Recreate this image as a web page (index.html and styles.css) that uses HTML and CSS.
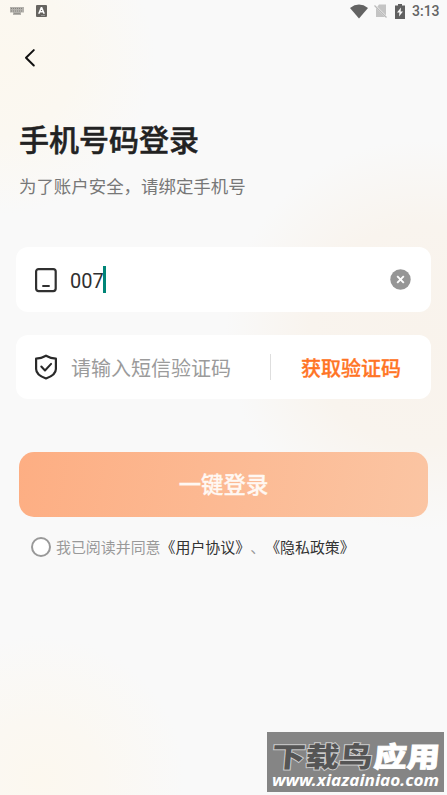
FILE: index.html
```html
<!DOCTYPE html>
<html lang="zh-CN">
<head>
<meta charset="UTF-8">
<meta name="viewport" content="width=device-width, initial-scale=1">
<title>手机号码登录</title>
<link rel="stylesheet" href="styles.css">
</head>
<body>
<main class="screen">
  <header class="status">
    <svg class="keyboard" width="14" height="8" viewBox="0 0 14 8"><path d="M0 0h14v5.500h-3V8H3V5.500H0z" fill="#b3b1ac"/><path d="M1 1.500h12M1 4h12" stroke="#85837e" stroke-width="1" stroke-dasharray="1 1"/><path d="M4 6.500h6" stroke="#96948f"/></svg>
    <svg width="11" height="12" viewBox="0 0 11 12"><rect width="11" height="12" rx="1" fill="#666460"/><path d="M2.800 8.700 5.300 2.800h.4l2.500 5.900M3.800 6.800h3.400" fill="none" stroke="#fff" stroke-width="1.500"/><path d="M5 10.500h4" stroke="#aaa" stroke-width=".7"/></svg>
    <span class="spacer"></span>
    <svg class="wifi" width="18" height="15" viewBox="0 0 18 15"><path d="M0 4Q9-2.800 18 4L9 14.500z" fill="#636363"/></svg>
    <svg class="sim" width="14" height="14" viewBox="0 0 14 14"><path d="M5 .5h7v11L3.300 2.800z" fill="#c4c4c4"/><path d="M2 4 11 13H2z" fill="#c4c4c4"/><path d="m.5 1.500 12 12" stroke="#bababa" stroke-width="1.200"/></svg>
    <svg class="battery" width="10" height="15" viewBox="0 0 10 15"><path d="M3 0h4v1.500h3V15H0V1.500h3z" fill="#606060"/><path d="M6 3.500 2 8.500h2.400L4 12.500l4-5H5.600z" fill="#f9f9f9"/></svg>
    <span class="time">3:13</span>
  </header>
  <nav class="nav"><svg width="12" height="20" viewBox="0 0 12 20"><path d="M9.800 2.100 2 9.700l7.800 7.800" fill="none" stroke="#111" stroke-width="2" stroke-linecap="round" stroke-linejoin="round"/></svg></nav>
  <h1 class="title">手机号码登录</h1>
  <p class="subtitle">为了账户安全，请绑定手机号</p>
  <section class="field phone">
    <svg width="24" height="26" viewBox="0 0 24 26"><rect x="2.100" y="2.100" width="19.600" height="22" rx="2.500" fill="none" stroke="#303030" stroke-width="2.200"/><path d="M9 19h6" stroke="#303030" stroke-width="1.900" stroke-linecap="round"/></svg>
    <span class="number">007</span><i class="caret"></i>
    <svg class="clear" width="21" height="21" viewBox="0 0 21 21"><circle cx="10.500" cy="10.500" r="10.200" fill="#969696"/><path d="m7.200 7.200 6.600 6.600m0-6.600-6.600 6.600" stroke="#fff" stroke-width="1.900"/></svg>
  </section>
  <section class="field code">
    <svg width="24" height="26" viewBox="0 0 24 26"><path d="M12 1.700Q16.500 4.300 21.900 4.700V15Q21.900 21 12 24.500Q2.100 21 2.100 15V4.700Q7.500 4.300 12 1.700Z" fill="none" stroke="#292929" stroke-width="2.200" stroke-linejoin="round"/><path d="m7.300 12.500 3.700 4 6.100-6.600" fill="none" stroke="#292929" stroke-width="2" stroke-linecap="round" stroke-linejoin="round"/></svg>
    <span class="placeholder">请输入短信验证码</span>
    <i class="divider"></i>
    <span class="get-code">获取验证码</span>
  </section>
  <button class="submit">一键登录</button>
  <div class="agreement"><i class="radio"></i><span>我已阅读并同意<b>《用户协议》</b>、<b>《隐私政策》</b></span></div>
  <aside class="watermark">
    <svg width="177" height="60" viewBox="0 0 177 60">
      <g class="brand" transform="translate(4 35) skewX(-5) scale(1 .9)">
        <text class="brand-dark" textLength="101" lengthAdjust="spacingAndGlyphs">下载鸟</text>
        <text class="brand-light" x="102" textLength="66" lengthAdjust="spacingAndGlyphs">应用</text>
      </g>
      <text class="site" x="5" y="54" textLength="167" lengthAdjust="spacingAndGlyphs">www.xiazainiao.com</text>
    </svg>
  </aside>
</main>
</body>
</html>
```
FILE: styles.css
```css
* { box-sizing: border-box; }
body { margin: 0; font-family: "Noto Sans CJK SC", sans-serif; text-spacing-trim: space-all; }
svg { display: block; flex: none; }
.screen {
  position: relative;
  width: 447px;
  height: 795px;
  overflow: hidden;
  background:
    radial-gradient(circle at 0 60px, #fcf8ef 0, #fbf8f1 75px, rgba(249,249,249,0) 155px),
    radial-gradient(circle at 420px 335px, #f9f3ec 0, #f9f4ee 110px, rgba(249,249,249,0) 195px),
    radial-gradient(circle at 40px 780px, #fcf8ef 0, #fbf8f2 60px, rgba(249,249,249,0) 145px),
    #f9f9f9;
}
.status { display: flex; align-items: center; height: 22px; padding: 0 7px 0 10px; }
.keyboard { margin-right: 12px; }
.spacer { flex: 1; }
.wifi { margin-right: 6px; }
.sim { margin-right: 7px; }
.battery { margin-right: 7px; }
.time { width: 28px; font: 500 14px/22px Roboto, sans-serif; color: #646464; }
.nav { height: 96px; padding: 26px 0 0 24px; }
.title { margin: 0 0 0 19px; font-size: 30px; line-height: 40px; font-weight: 500; color: #222; -webkit-text-stroke: .5px #222; }
.subtitle { margin: 15px 0 0 19px; font-size: 17.45px; line-height: 26px; color: #777; }
.field { display: flex; align-items: center; height: 65px; margin: 0 16px; padding: 0 20px 0 18px; border-radius: 12px; background: #fff; }
.phone { margin-top: 48px; }
.number { margin-left: 12px; padding-top: 2px; font: 20px/28px Roboto, sans-serif; color: #303030; }
.caret { width: 3px; height: 27px; background: #008577; margin-left: -1px; }
.clear { margin-left: auto; }
.code { height: 64px; margin-top: 23px; }
.placeholder { margin-left: 13px; padding-top: 1px; font-size: 20px; line-height: 30px; color: #9b9b9b; }
.divider { width: 1px; height: 26px; margin-left: 39px; background: #dedede; }
.get-code { margin-left: 30px; padding-top: 1px; font-size: 20px; line-height: 30px; font-weight: 500; color: #ff7425; -webkit-text-stroke: .3px #ff7425; }
.submit { display: block; width: 409px; height: 65px; margin: 53px 0 0 19px; padding: 0 0 3px; border: 0; border-radius: 15px; background: linear-gradient(100deg, #fdae83, #fbc5a3); color: #fff8f3; font: 500 22.4px/62px "Noto Sans CJK SC", sans-serif; -webkit-text-stroke: .3px #fff8f3; }
.agreement { display: flex; align-items: center; height: 30px; margin: 15px 0 0 31px; font-size: 14.95px; line-height: 20px; color: #999; white-space: nowrap; }
.agreement span { padding-bottom: 1px; }
.agreement b { font-weight: 400; color: #333; }
.radio { width: 20px; height: 20px; margin-right: 5px; border: 2px solid #999; border-radius: 50%; background: #fff; }
.watermark { position: absolute; left: 267px; top: 732px; width: 177px; height: 60px; background: #858585; }
.brand { font-size: 31px; font-weight: 900; }
.brand text { paint-order: stroke; }
.brand-dark { fill: #555; stroke: #ccc; stroke-width: 2px; }
.brand-light { fill: #fff; stroke: #fff; stroke-width: 1px; }
.site { font: italic bold 16px "Noto Sans", sans-serif; fill: #fff; }
```
